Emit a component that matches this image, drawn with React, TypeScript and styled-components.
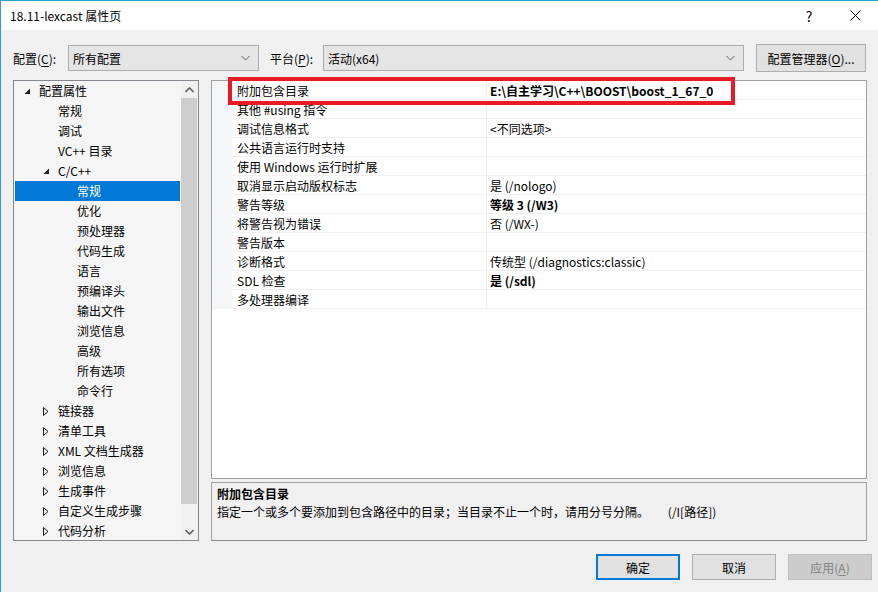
import React from "react";
import styled, { createGlobalStyle, css } from "styled-components";

const Global = createGlobalStyle`
  html, body { margin: 0; padding: 0; background: #f0f0f0; }
  body { font-family: "Noto Sans CJK SC", "Noto Sans", sans-serif; font-size: 12px; color: #000; }
  * { box-sizing: border-box; }
`;

const Window = styled.div`
  width: 878px;
  height: 592px;
  display: flex;
  flex-direction: column;
  background: #f0f0f0;
  border-top: 1px solid #2aa0c6;
  border-left: 1px solid #2aa0c6;
  overflow: hidden;
`;

const TitleBar = styled.div`
  height: 29px;
  flex: none;
  background: #fff;
  display: flex;
  align-items: center;
  padding-left: 9px;
`;

const Title = styled.div`
  flex: 1;
  font-size: 12px;
  line-height: 16px;
`;

const TitleButton = styled.div`
  width: 46px;
  height: 29px;
  display: flex;
  align-items: center;
  justify-content: center;
  font-size: 14px;
  color: #000;
`;

const ConfigRow = styled.div`
  margin-top: 14px;
  height: 28px;
  flex: none;
  display: flex;
  align-items: center;
  padding-left: 12px;
`;

const Label = styled.div<{ $w: number; $ml?: number }>`
  width: ${(p) => p.$w}px;
  margin-left: ${(p) => p.$ml ?? 0}px;
  flex: none;
  white-space: nowrap;
`;

const U = styled.span`
  text-decoration: underline;
  text-underline-offset: 2px;
`;

const Select = styled.div<{ $w: number }>`
  width: ${(p) => p.$w}px;
  height: 26px;
  flex: none;
  display: flex;
  align-items: center;
  justify-content: space-between;
  padding: 0 8px 0 4px;
  background: #e5e5e5;
  border: 1px solid #acacac;
`;

const ManagerButton = styled.div`
  margin-left: 12px;
  width: 110px;
  height: 28px;
  display: flex;
  align-items: center;
  justify-content: center;
  background: #e1e1e1;
  border: 1px solid #adadad;
`;

const Main = styled.div`
  margin-top: 8px;
  height: 461px;
  flex: none;
  display: flex;
  padding-left: 12px;
  gap: 12px;
`;

const Tree = styled.div`
  width: 186px;
  height: 461px;
  border: 1px solid #828790;
  background: #f5f5f5;
  display: flex;
  overflow: hidden;
`;

const TreeList = styled.div`
  flex: 1;
  padding: 0 1px;
  overflow: hidden;
`;

const TreeRow = styled.div<{ $level: number; $selected?: boolean }>`
  height: 20px;
  line-height: 18px;
  display: flex;
  align-items: center;
  padding-left: ${(p) => 5 + p.$level * 19}px;
  white-space: nowrap;
  ${(p) =>
    p.$selected &&
    css`
      background: #0078d7;
      color: #fff;
    `}
`;

const Toggle = styled.span`
  width: 19px;
  flex: none;
  display: flex;
  align-items: center;
  padding-left: 4px;
`;

const ScrollBar = styled.div`
  width: 17px;
  flex: none;
  background: #f0f0f0;
  display: flex;
  flex-direction: column;
`;

const ScrollArrow = styled.div`
  height: 17px;
  flex: none;
  display: flex;
  align-items: center;
  justify-content: center;
`;

const ScrollThumb = styled.div`
  height: 406px;
  margin-right: 1px;
  background: #cdcdcd;
  flex: none;
`;

const ScrollSpace = styled.div`
  flex: 1;
`;

const RightColumn = styled.div`
  width: 656px;
  display: flex;
  flex-direction: column;
  gap: 3px;
`;

const GridBox = styled.div`
  position: relative;
  height: 399px;
  background: #fff;
  border: 1px solid #a0a0a0;
`;

const GridRow = styled.div`
  height: 19px;
  display: grid;
  grid-template-columns: 20px 254px 1fr;
`;

const Gutter = styled.div`
  background: #f4f5f7;
`;

const Cell = styled.div<{ $bold?: boolean; $value?: boolean }>`
  border-bottom: 1px solid #f0f0f0;
  ${(p) => p.$value && "border-left: 1px solid #f0f0f0;"}
  padding-left: ${(p) => (p.$value ? 3 : 5)}px;
  line-height: 19px;
  white-space: nowrap;
  overflow: hidden;
  font-weight: ${(p) => (p.$bold ? 700 : 400)};
`;

const Highlight = styled.div`
  position: absolute;
  left: 16px;
  top: -4px;
  width: 507px;
  height: 28px;
  border: 4px solid #e81a24;
  pointer-events: none;
`;

const Description = styled.div`
  height: 59px;
  border: 1px solid #a0a0a0;
  border-bottom-color: #8a8a8a;
  background: #f0f0f0;
  padding: 2px 5px;
`;

const DescTitle = styled.div`
  font-weight: 700;
  line-height: 18px;
`;

const DescText = styled.div`
  line-height: 18px;
  white-space: pre;
`;

const Footer = styled.div`
  margin-top: 13px;
  height: 26px;
  flex: none;
  display: flex;
  justify-content: flex-end;
  gap: 12px;
  padding-right: 6px;
`;

const DialogButton = styled.div<{ $primary?: boolean; $disabled?: boolean }>`
  width: 84px;
  height: 26px;
  display: flex;
  align-items: center;
  justify-content: center;
  background: ${(p) => (p.$disabled ? "#cccccc" : "#e1e1e1")};
  border: ${(p) =>
    p.$primary ? "2px solid #0078d7" : p.$disabled ? "1px solid #bfbfbf" : "1px solid #adadad"};
  color: ${(p) => (p.$disabled ? "#838383" : "#000")};
`;

const Chevron = ({ dir, bold }: { dir: "up" | "down"; bold?: boolean }) => (
  <svg width="9" height="6" viewBox="0 0 9 6">
    <polyline
      points={dir === "down" ? "0.5,1 4.5,5 8.5,1" : "0.5,5 4.5,1 8.5,5"}
      fill="none"
      stroke="#606060"
      strokeWidth={bold ? 1.6 : 1}
    />
  </svg>
);

const ExpandedIcon = () => (
  <svg width="7" height="7" viewBox="0 0 7 7">
    <polygon points="6,0.5 6,6 0.5,6" fill="#1e1e1e" />
  </svg>
);

const CollapsedIcon = () => (
  <svg width="6" height="9" viewBox="0 0 6 9">
    <polygon points="0.5,0.5 5,4.5 0.5,8.5" fill="none" stroke="#1e1e1e" strokeWidth="1" />
  </svg>
);

type TreeItem = { label: string; level: number; state?: "open" | "closed"; selected?: boolean };

const treeItems: TreeItem[] = [
  { label: "配置属性", level: 0, state: "open" },
  { label: "常规", level: 1 },
  { label: "调试", level: 1 },
  { label: "VC++ 目录", level: 1 },
  { label: "C/C++", level: 1, state: "open" },
  { label: "常规", level: 2, selected: true },
  { label: "优化", level: 2 },
  { label: "预处理器", level: 2 },
  { label: "代码生成", level: 2 },
  { label: "语言", level: 2 },
  { label: "预编译头", level: 2 },
  { label: "输出文件", level: 2 },
  { label: "浏览信息", level: 2 },
  { label: "高级", level: 2 },
  { label: "所有选项", level: 2 },
  { label: "命令行", level: 2 },
  { label: "链接器", level: 1, state: "closed" },
  { label: "清单工具", level: 1, state: "closed" },
  { label: "XML 文档生成器", level: 1, state: "closed" },
  { label: "浏览信息", level: 1, state: "closed" },
  { label: "生成事件", level: 1, state: "closed" },
  { label: "自定义生成步骤", level: 1, state: "closed" },
  { label: "代码分析", level: 1, state: "closed" },
];

type Prop = { name: string; value?: string; bold?: boolean };

const props: Prop[] = [
  { name: "附加包含目录", value: "E:\\自主学习\\C++\\BOOST\\boost_1_67_0", bold: true },
  { name: "其他 #using 指令" },
  { name: "调试信息格式", value: "<不同选项>" },
  { name: "公共语言运行时支持" },
  { name: "使用 Windows 运行时扩展" },
  { name: "取消显示启动版权标志", value: "是 (/nologo)" },
  { name: "警告等级", value: "等级 3 (/W3)", bold: true },
  { name: "将警告视为错误", value: "否 (/WX-)" },
  { name: "警告版本" },
  { name: "诊断格式", value: "传统型 (/diagnostics:classic)" },
  { name: "SDL 检查", value: "是 (/sdl)", bold: true },
  { name: "多处理器编译" },
];

export default function App() {
  return (
    <>
      <Global />
      <Window>
        <TitleBar>
          <Title>18.11-lexcast 属性页</Title>
          <TitleButton>?</TitleButton>
          <TitleButton>
            <svg width="11" height="11" viewBox="0 0 11 11">
              <path d="M0.5 0.5 L10.5 10.5 M10.5 0.5 L0.5 10.5" stroke="#000" strokeWidth="1" />
            </svg>
          </TitleButton>
        </TitleBar>

        <ConfigRow>
          <Label $w={55}>
            配置(<U>C</U>):
          </Label>
          <Select $w={191}>
            <span>所有配置</span>
            <Chevron dir="down" />
          </Select>
          <Label $w={53} $ml={11}>
            平台(<U>P</U>):
          </Label>
          <Select $w={421}>
            <span>活动(x64)</span>
            <Chevron dir="down" />
          </Select>
          <ManagerButton>
            配置管理器(<U>O</U>)...
          </ManagerButton>
        </ConfigRow>

        <Main>
          <Tree>
            <TreeList>
              {treeItems.map((t, i) => (
                <TreeRow key={i} $level={t.level} $selected={t.selected}>
                  <Toggle>
                    {t.state === "open" && <ExpandedIcon />}
                    {t.state === "closed" && <CollapsedIcon />}
                  </Toggle>
                  {t.label}
                </TreeRow>
              ))}
            </TreeList>
            <ScrollBar>
              <ScrollArrow>
                <Chevron dir="up" bold />
              </ScrollArrow>
              <ScrollThumb />
              <ScrollSpace />
              <ScrollArrow>
                <Chevron dir="down" bold />
              </ScrollArrow>
            </ScrollBar>
          </Tree>

          <RightColumn>
            <GridBox>
              {props.map((p, i) => (
                <GridRow key={i}>
                  <Gutter />
                  <Cell>{p.name}</Cell>
                  <Cell $value $bold={p.bold}>
                    {p.value ?? ""}
                  </Cell>
                </GridRow>
              ))}
              <Highlight />
            </GridBox>
            <Description>
              <DescTitle>附加包含目录</DescTitle>
              <DescText>指定一个或多个要添加到包含路径中的目录；当目录不止一个时，请用分号分隔。       (/I[路径])</DescText>
            </Description>
          </RightColumn>
        </Main>

        <Footer>
          <DialogButton $primary>确定</DialogButton>
          <DialogButton>取消</DialogButton>
          <DialogButton $disabled>
            应用(<U>A</U>)
          </DialogButton>
        </Footer>
      </Window>
    </>
  );
}
